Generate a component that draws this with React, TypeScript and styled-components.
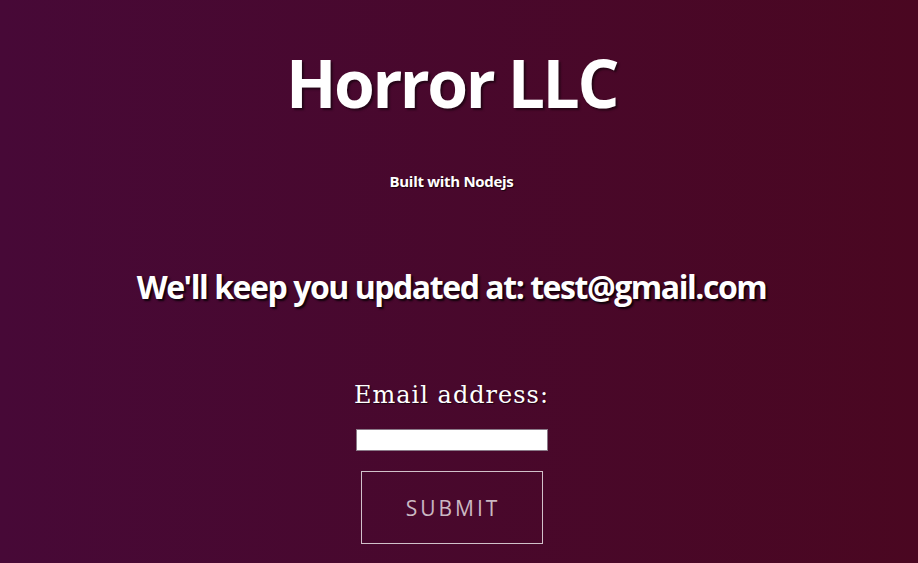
import React from "react";
import styled, { createGlobalStyle } from "styled-components";

const Global = createGlobalStyle`
  html, body { margin: 0; padding: 0; height: 100%; }
  body {
    background: linear-gradient(to right, #470937, #4a0721);
    min-height: 563px;
    overflow: hidden;
  }
`;

const Page = styled.div`
  min-height: 563px;
  display: flex;
  flex-direction: column;
  align-items: center;
  color: #fff;
  font-family: "Open Sans", sans-serif;
  text-align: center;
  padding: 42px 15px 0 0;
  box-sizing: border-box;
`;

const Title = styled.h1`
  margin: 0;
  font-size: 66px;
  font-weight: 700;
  line-height: 80px;
  letter-spacing: -2.5px;
  text-shadow: 2px 2px 2px rgba(0, 0, 0, 0.5);
`;

const Sub = styled.p`
  margin: 49px 0 0;
  font-size: 15px;
  font-weight: 700;
  line-height: 20px;
  letter-spacing: -0.3px;
  text-shadow: 1px 1px 1px rgba(0, 0, 0, 0.7);
`;

const Updated = styled.h2`
  margin: 74px 0 0;
  font-size: 32px;
  font-weight: 700;
  line-height: 44px;
  letter-spacing: -1.45px;
  text-shadow: 2px 2px 2px rgba(0, 0, 0, 0.8);
`;

const Form = styled.form`
  margin-top: 71px;
  display: flex;
  flex-direction: column;
  align-items: center;
`;

const Label = styled.label`
  font-family: "DejaVu Serif", serif;
  font-size: 24px;
  line-height: 30px;
  letter-spacing: 1px;
  text-shadow: 1px 1px 1px rgba(0, 0, 0, 0.6);
`;

const Input = styled.input`
  margin-top: 19px;
  width: 192px;
  height: 22px;
  box-sizing: border-box;
  border: 1px solid #8a7a88;
  background: #fff;
  padding: 0 4px;
`;

const Button = styled.button`
  margin-top: 20px;
  width: 182px;
  height: 73px;
  background: transparent;
  border: 1px solid rgba(255, 255, 255, 0.75);
  color: rgba(255, 255, 255, 0.72);
  font-family: "Open Sans", sans-serif;
  font-size: 21px;
  letter-spacing: 3px;
  text-indent: 3px;
  text-transform: uppercase;
  cursor: pointer;
`;

export default function App() {
  return (
    <>
      <Global />
      <Page>
        <Title>Horror LLC</Title>
        <Sub>Built with Nodejs</Sub>
        <Updated>We'll keep you updated at: test@gmail.com</Updated>
        <Form onSubmit={(e) => e.preventDefault()}>
          <Label htmlFor="email">Email address:</Label>
          <Input id="email" type="email" />
          <Button type="submit">Submit</Button>
        </Form>
      </Page>
    </>
  );
}
